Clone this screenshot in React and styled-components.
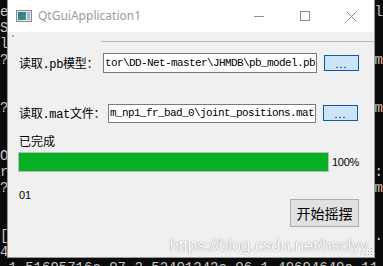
import styled, { createGlobalStyle } from 'styled-components'

const GlobalStyle = createGlobalStyle`
  html, body {
    margin: 0;
    padding: 0;
    background: #0c0c0c;
  }
`

// 背景里的控制台，只露出左右两边和最底下一行
const termLines = [
  ['e', 'pl'],
  ['S', ''],
  ['l', ''],
  ['?', 'm'],
  ['', ''],
  ['', ''],
  ['?', 'm'],
  ['', ''],
  ['', ''],
  ['O', ''],
  ['r', 'r:'],
  ['?', 'm'],
  ['', ''],
  ['', ''],
  ['[', '4.'],
  ['4.', ''],
]

const Desktop = styled.div`
  position: relative;
  width: 383px;
  height: 266px;
  overflow: hidden;
  background: #0c0c0c;
`

const Terminal = styled.div`
  padding-top: 4px;
  font-family: 'Liberation Mono', monospace;
  font-size: 14px;
  line-height: 16px;
  color: #c8c8c8;
`

const TermLine = styled.div`
  display: flex;
  justify-content: space-between;
  height: 16px;
  white-space: pre;
`

const Window = styled.div`
  position: absolute;
  left: 7px;
  top: 0;
  width: 368px;
  height: 258px;
  box-sizing: border-box;
  border: 1px solid #9a9a9a;
  border-top: none;
  background: #f0f0f0;
  display: flex;
  flex-direction: column;
`

const TitleBar = styled.div`
  height: 32px;
  background: #ffffff;
  display: flex;
  align-items: center;
  padding-left: 8px;
  flex-shrink: 0;
`

const Title = styled.span`
  margin-left: 6px;
  font-family: 'Noto Sans', sans-serif;
  font-size: 12px;
  color: #9a9a9a;
  flex: 1;
  margin-top: -1px;
`

const Controls = styled.div`
  display: flex;
  height: 100%;
`

const CtrlBtn = styled.div`
  width: 46px;
  height: 100%;
  display: flex;
  align-items: center;
  justify-content: center;
`

const Body = styled.div`
  position: relative;
  flex: 1;
  display: flex;
  flex-direction: column;
  padding: 0 0 0 10px;
`

const Handle = styled.div`
  position: absolute;
  left: 4px;
  top: 3px;
  width: 2px;
  height: 2px;
  background: #b0b0b0;
`

const TopLine = styled.div`
  height: 1px;
  background: #b9b9b9;
  margin: 9px 0 0 83px;
`

const Row = styled.div`
  display: flex;
  align-items: center;
  height: 20px;
  margin-top: ${(p) => p.$mt}px;
  margin-left: 1px;
`

const Label = styled.span`
  font-family: 'Liberation Mono', 'Noto Sans CJK SC', monospace;
  font-size: 12px;
  color: #000;
  width: ${(p) => p.$w}px;
  white-space: nowrap;
  letter-spacing: -0.3px;
`

const Edit = styled.div`
  width: ${(p) => p.$w}px;
  height: ${(p) => p.$h}px;
  box-sizing: border-box;
  border: 1px solid #7a7a7a;
  background: #fff;
  display: flex;
  align-items: center;
  padding-left: 1px;
  overflow: hidden;
  font-family: 'Liberation Mono', monospace;
  font-size: 11px;
  letter-spacing: -0.6px;
  white-space: nowrap;
  color: #000;
`

const DotsButton = styled.div`
  width: 35px;
  height: 16px;
  box-sizing: border-box;
  margin-left: ${(p) => p.$ml}px;
  border: 1px solid #0a5aa6;
  background: #cce4f7;
  display: flex;
  align-items: center;
  justify-content: center;
  font-family: 'Liberation Sans', sans-serif;
  font-size: 11px;
  letter-spacing: 1px;
  color: #000;
  padding-top: 1px;
`

const Caption = styled.div`
  font-family: 'Noto Sans CJK SC', sans-serif;
  font-size: 12px;
  line-height: 14px;
  color: #000;
  margin: ${(p) => p.$mt}px 0 0 1px;
`

const ProgressRow = styled.div`
  display: flex;
  align-items: center;
  margin-top: 4px;
`

const Track = styled.div`
  width: 311px;
  height: 20px;
  box-sizing: border-box;
  border: 1px solid #bcbcbc;
  background: #e6e6e6;
`

const Fill = styled.div`
  height: 100%;
  background: #06b025;
`

const Percent = styled.span`
  margin-left: 3px;
  font-family: 'Liberation Sans', sans-serif;
  font-size: 11px;
  letter-spacing: -0.3px;
  color: #000;
`

const Number = styled.div`
  font-family: 'Liberation Sans', sans-serif;
  font-size: 11px;
  color: #000;
  margin: 17px 0 0 1px;
`

const StartRow = styled.div`
  display: flex;
  justify-content: flex-end;
  padding-right: 15px;
  margin-top: -2px;
`

const StartButton = styled.div`
  width: 69px;
  height: 28px;
  box-sizing: border-box;
  border: 1px solid #adadad;
  background: #e1e1e1;
  display: flex;
  align-items: center;
  justify-content: center;
  font-family: 'Noto Sans CJK SC', sans-serif;
  font-size: 14px;
  color: #000;
`

const Watermark = styled.div`
  position: absolute;
  right: 6px;
  bottom: 1px;
  font-family: 'Liberation Sans', sans-serif;
  font-size: 17px;
  color: #ffffff;
  text-shadow: 0 0 1px rgba(0, 0, 0, 0.45), 0 0 2px rgba(0, 0, 0, 0.15);
  letter-spacing: -0.2px;
`

const Grip = styled.svg`
  position: absolute;
  right: 1px;
  bottom: 1px;
`

const AppIcon = () => (
  <svg width='16' height='14' viewBox='0 0 16 14'>
    <rect x='0.5' y='1.5' width='15' height='11' fill='#e8e8e8' stroke='#8a8a8a' />
    <defs>
      <linearGradient id='g' x1='0' y1='0' x2='1' y2='1'>
        <stop offset='0' stopColor='#2f6fa8' />
        <stop offset='1' stopColor='#3f9a6a' />
      </linearGradient>
    </defs>
    <rect x='2' y='3' width='8' height='8' fill='url(#g)' />
    <rect x='11' y='3' width='3' height='8' fill='#9fbcd4' />
  </svg>
)

const App = () => {
  const progress = 100

  return (
    <Desktop>
      <GlobalStyle />
      <Terminal>
        {termLines.map(([l, r], i) => (
          <TermLine key={i}>
            <span>{l}</span>
            <span>{r}</span>
          </TermLine>
        ))}
        <TermLine>
          <span> 1.51695716e-07 2.52401242e-06 1.49694640e-11</span>
        </TermLine>
      </Terminal>

      <Window>
        <TitleBar>
          <AppIcon />
          <Title>QtGuiApplication1</Title>
          <Controls>
            <CtrlBtn>
              <svg width='10' height='10' viewBox='0 0 10 10'>
                <line x1='0' y1='5.5' x2='10' y2='5.5' stroke='#8c8c8c' strokeWidth='1' />
              </svg>
            </CtrlBtn>
            <CtrlBtn>
              <svg width='10' height='10' viewBox='0 0 10 10'>
                <rect x='0.5' y='0.5' width='9' height='9' fill='none' stroke='#8c8c8c' />
              </svg>
            </CtrlBtn>
            <CtrlBtn>
              <svg width='11' height='11' viewBox='0 0 11 11'>
                <path d='M0.5 0.5 L10.5 10.5 M10.5 0.5 L0.5 10.5' stroke='#8c8c8c' strokeWidth='1' />
              </svg>
            </CtrlBtn>
          </Controls>
        </TitleBar>

        <Body>
          <Handle />
          <TopLine />

          <Row $mt={11}>
            <Label $w={84}>读取.pb模型：</Label>
            <Edit $w={214} $h={20}>tor\DD-Net-master\JHMDB\pb_model.pb</Edit>
            <DotsButton $ml={7}>...</DotsButton>
          </Row>

          <Row $mt={30}>
            <Label $w={89}>读取.mat文件：</Label>
            <Edit $w={208} $h={19}>m_np1_fr_bad_0\joint_positions.mat</Edit>
            <DotsButton $ml={7}>...</DotsButton>
          </Row>

          <Caption $mt={11}>已完成</Caption>

          <ProgressRow>
            <Track>
              <Fill style={{ width: progress + '%' }} />
            </Track>
            <Percent>{progress}%</Percent>
          </ProgressRow>

          <Number>01</Number>

          <StartRow>
            <StartButton>开始摇摆</StartButton>
          </StartRow>

          <Watermark>https://blog.csdn.net/hsclyy</Watermark>
          <Grip width='10' height='10' viewBox='0 0 10 10'>
            {[
              [8, 2],
              [8, 5],
              [5, 5],
              [8, 8],
              [5, 8],
              [2, 8],
            ].map(([x, y], i) => (
              <rect key={i} x={x} y={y} width='1' height='1' fill='#a0a0a0' />
            ))}
          </Grip>
        </Body>
      </Window>
    </Desktop>
  )
}

export default App
